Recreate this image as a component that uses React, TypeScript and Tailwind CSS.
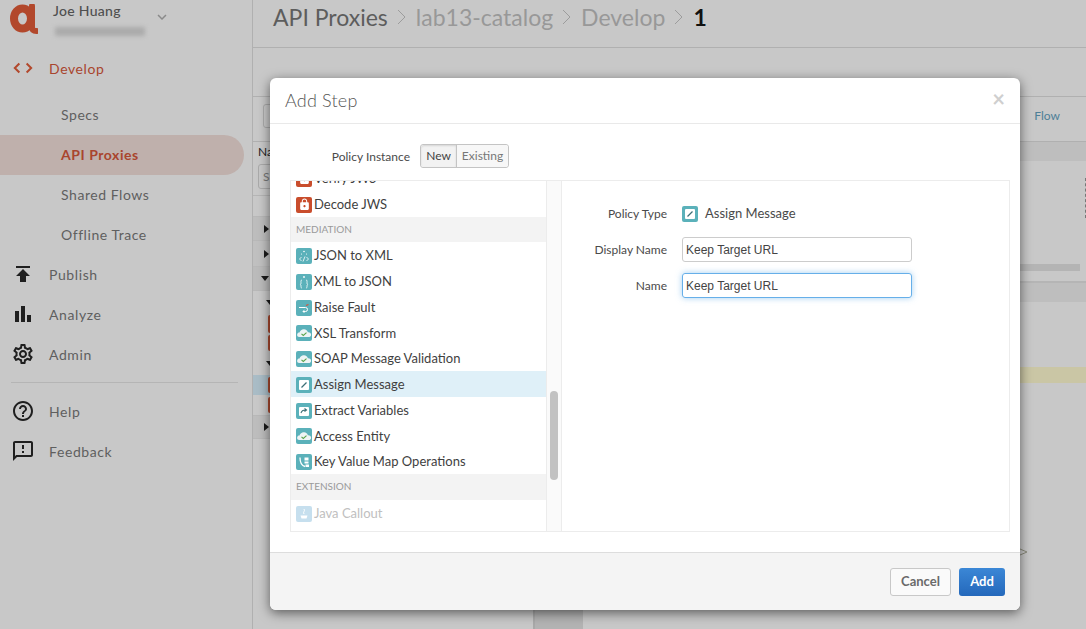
import React from "react";
import { MdPublish, MdBarChart, MdOutlineSettings, MdHelpOutline, MdOutlineFeedback, MdKeyboardArrowDown, MdLock } from "react-icons/md";

type Kind = "lock" | "code" | "braces" | "fault" | "cloud" | "edit" | "extract" | "kvm" | "java";

function PolicyIcon({ kind, dim }: { kind: Kind; dim?: boolean }) {
  const bg = kind === "lock" ? "bg-[#c94d2c]" : dim ? "bg-[#c6dfee]" : "bg-[#5bb1ba]";
  return (
    <span className={`flex h-[16px] w-[16px] shrink-0 items-center justify-center rounded-[2px] ${bg}`}>
      {kind === "lock" && <MdLock className="h-[13px] w-[13px] text-white" />}
      {kind !== "lock" && (
        <svg viewBox="0 0 16 16" className="h-[16px] w-[16px]" fill="none" stroke="#fff" strokeWidth="1">
          {kind === "code" && (
            <>
              <circle cx="8" cy="3.5" r="0.8" fill="#fff" stroke="none" />
              <circle cx="5.5" cy="6" r="0.6" fill="#fff" stroke="none" />
              <circle cx="10.5" cy="6" r="0.6" fill="#fff" stroke="none" />
              <path d="M5.5 9 3.5 11l2 2M10.5 9l2 2-2 2M9 8.5l-2 5" strokeWidth="0.8" />
            </>
          )}
          {kind === "braces" && (
            <>
              <circle cx="8" cy="3" r="0.9" fill="#fff" stroke="none" />
              <path d="M6 6c-1.4 0-1 1.5-1 2.5S5 10 4 10.5c1 .5 1 .8 1 2s.2 1.5 1 1.5M10 6c1.4 0 1 1.5 1 2.5s0 1.500 1 2c-1 .5-1 .8-1 2s-.2 1.500-1 1.500" strokeWidth="0.8" />
            </>
          )}
          {kind === "fault" && (
            <>
              <path d="M3 7.500h6.500a2 2 0 0 1 0 4H7" strokeWidth="1" />
              <path d="M8.500 9.800 7 11.500l1.500 1.500" strokeWidth="0.8" />
              <path d="M10 5.500l2.500-1" stroke="#d9533a" strokeWidth="1.200" />
            </>
          )}
          {kind === "cloud" && (
            <>
              <path d="M3.500 12C1.500 12 .8 10.500 1.200 9.200 1.500 8 2.500 7.500 3.500 7.600 4 5.500 6 4 8 4.200c2 .1 3.500 1.400 3.800 3 2-.2 3.300 1 3.300 2.500S14 12 12.500 12Z" fill="#eef4f5" stroke="none" />
              <path d="M5.500 8.800 7.300 10.500l3.200-2.800" stroke="#5aa34a" strokeWidth="1.100" />
            </>
          )}
          {kind === "edit" && (
            <>
              <rect x="3" y="3" width="10" height="10" rx="1" fill="#fff" stroke="none" />
              <path d="M5.500 10.500 10.500 5.500" stroke="#3d6f76" strokeWidth="1.300" />
            </>
          )}
          {kind === "extract" && (
            <>
              <rect x="3" y="4" width="10" height="9" rx="1" fill="#fff" stroke="none" />
              <path d="M5 10c.5-2 2-3 4.500-3M8.500 5.500 10.500 7 8.500 8.500" stroke="#3d6f76" strokeWidth="1.100" />
            </>
          )}
          {kind === "kvm" && (
            <>
              <path d="M4 3.500c0 5 1 8 5 9" strokeWidth="1.300" />
              <rect x="8.500" y="3.500" width="4" height="3" fill="#fff" stroke="none" />
              <rect x="8.500" y="7.500" width="4" height="2" fill="#fff" stroke="none" />
              <rect x="9.500" y="10.500" width="3.500" height="2.500" fill="#fff" stroke="none" />
            </>
          )}
          {kind === "java" && (
            <>
              <path d="M8 3c1.500 2-1.500 3 0 5" strokeWidth="1" />
              <path d="M4.500 9.500h7l-1 3h-5Z" fill="#fff" stroke="none" />
            </>
          )}
        </svg>
      )}
    </span>
  );
}

function Row({ kind, label, selected, dim }: { kind: Kind; label: string; selected?: boolean; dim?: boolean }) {
  return (
    <div className={`flex h-[25.75px] items-center gap-[2px] pl-[5px] pt-[2px] text-[13px] ${selected ? "bg-[#dff0f8]" : ""} ${dim ? "text-[#c0c0c0]" : "text-[#3f3f3f]"}`}>
      <PolicyIcon kind={kind} dim={dim} />
      <span>{label}</span>
    </div>
  );
}

function GroupHead({ label }: { label: string }) {
  return <div className="flex h-[25.75px] items-center bg-[#f3f3f3] pl-[5px] text-[10px] text-[#9a9a9a]">{label}</div>;
}

function NavItem({ icon, label, active }: { icon: React.ReactNode; label: string; active?: boolean }) {
  return (
    <div className={`flex h-10 items-center text-[14px] tracking-[0.6px] ${active ? "text-[#a9452e]" : "text-[#5f5f5f]"}`}>
      <span className="mr-[3px] flex w-[46px] shrink-0 justify-center">{icon}</span>
      <span>{label}</span>
    </div>
  );
}

function SubItem({ label, active }: { label: string; active?: boolean }) {
  return (
    <div className={`flex h-10 items-center pl-[61px] text-[14px] tracking-[0.55px] ${active ? "mr-2 translate-y-px rounded-r-full bg-[#bfb0ac] pb-[2px] font-bold tracking-[0.3px] text-[#a9452e]" : "text-[#5f5f5f]"}`}>
      {label}
    </div>
  );
}

function Chevron() {
  return (
    <svg viewBox="0 0 10 20" className="mx-[9px] mt-[5px] h-[20px] w-[10px]" fill="none" stroke="#9c9c9c" strokeWidth="1">
      <path d="M1 3l7 7-7 7" />
    </svg>
  );
}

function TreeArrow({ open, indent }: { open?: boolean; indent?: boolean }) {
  return (
    <span className={`${indent ? "ml-[13px]" : open ? "ml-[8px]" : "ml-[11px]"} inline-block h-0 w-0 ${open ? "border-x-[4px] border-t-[5px] border-x-transparent border-t-[#1a1a1a]" : "border-y-[4px] border-l-[5px] border-y-transparent border-l-[#1a1a1a]"}`} />
  );
}

export default function App() {
  return (
    <div className="relative flex h-[629px] w-[1086px] overflow-hidden bg-[#c8c8c8] font-['Lato','Noto_Sans',sans-serif]">
      {/* Sidebar */}
      <aside className="flex w-[253px] shrink-0 flex-col border-r border-[#b0b0b0]">
        <div className="flex h-[48px] items-start">
          <svg viewBox="0 0 28 30" className="ml-[10px] mt-[4px] h-[30px] w-[28px]" fill="none">
            <ellipse cx="12.500" cy="14.500" rx="8.500" ry="10" stroke="#b2482c" strokeWidth="8" />
            <path d="M22 2v21c0 3 1.500 4 4.500 4" stroke="#b2482c" strokeWidth="6" strokeLinecap="round" />
          </svg>
          <div className="ml-[15px] flex flex-col">
            <span className="mt-[1px] text-[14px] font-medium leading-[20px] tracking-[0.3px] text-[#4f4f4f]">Joe Huang</span>
            <span className="ml-[2px] mt-[6px] h-[9px] w-[90px] bg-[#ababab] blur-[2px]" />
          </div>
          <MdKeyboardArrowDown className="ml-[8px] mt-[8px] h-[18px] w-[18px] text-[#8a8a8a]" />
        </div>
        <NavItem
          active
          label="Develop"
          icon={
            <svg viewBox="0 0 22 12" className="h-[12px] w-[20px]" fill="none" stroke="#b2482c" strokeWidth="2.200">
              <path d="M7 1 2 6l5 5M15 1l5 5-5 5" />
            </svg>
          }
        />
        <div className="mt-[6px] flex flex-col">
          <SubItem label="Specs" />
          <SubItem label="API Proxies" active />
          <SubItem label="Shared Flows" />
          <SubItem label="Offline Trace" />
        </div>
        <NavItem label="Publish" icon={<MdPublish className="h-[24px] w-[24px] text-[#1f1f1f]" />} />
        <NavItem label="Analyze" icon={<MdBarChart className="h-[24px] w-[24px] text-[#1f1f1f]" />} />
        <NavItem label="Admin" icon={<MdOutlineSettings className="h-[24px] w-[24px] text-[#1f1f1f]" />} />
        <div className="mb-[8px] ml-[11px] mr-[14px] mt-[8px] border-t border-[#b5b5b5]" />
        <NavItem label="Help" icon={<MdHelpOutline className="h-[24px] w-[24px] text-[#1f1f1f]" />} />
        <NavItem label="Feedback" icon={<MdOutlineFeedback className="h-[24px] w-[24px] text-[#1f1f1f]" />} />
      </aside>

      {/* Main behind the dialog */}
      <main className="flex min-w-0 flex-1 flex-col">
        <header className="flex h-[48px] shrink-0 items-start border-b border-[#b0b0b0] pl-[20px] pt-[2px] text-[23px] leading-[30px]">
          <span className="text-[#5d5d5d]">API Proxies</span>
          <Chevron />
          <span className="text-[#989898]">lab13-catalog</span>
          <Chevron />
          <span className="text-[#989898]">Develop</span>
          <Chevron />
          <span className="font-bold text-[#111111]">1</span>
        </header>
        <div className="h-[49px] shrink-0 border-b border-[#b0b0b0]" />
        <div className="flex h-[45px] shrink-0 items-center justify-between border-b border-[#b0b0b0] pb-[7px] pl-[10px] pr-[26px]">
          <span className="h-[24px] w-[40px] rounded-[3px] border border-[#aaaaaa]" />
          <span className="text-[12px] text-[#4d7f97]">Flow</span>
        </div>
        <div className="flex min-h-0 flex-1">
          <div className="flex w-[280px] shrink-0 flex-col">
            <div className="h-[54px] shrink-0 border-b border-[#b5b5b5] pl-[5px] pt-[1px] text-[12px] text-[#222222]">
              Na
              <div className="mt-[3px] flex h-[25px] w-[40px] items-center rounded-[3px] border border-[#aaaaaa] pl-[4px] text-[#777777]">S</div>
            </div>
            <div className="h-[20px] shrink-0" />
            <div className="flex h-[25px] shrink-0 items-center border-y border-[#b8b8b8] bg-[#bdbdbd]"><TreeArrow /></div>
            <div className="flex h-[25px] shrink-0 items-center bg-[#c0c0c0]"><TreeArrow /></div>
            <div className="flex h-[25px] shrink-0 items-center border-y border-[#b8b8b8] bg-[#bbbbbb]"><TreeArrow open /></div>
            <div className="flex h-[22px] shrink-0 items-center"><TreeArrow open indent /></div>
            <div className="flex h-[21px] shrink-0 items-center pl-[15px]"><span className="h-[18px] w-[6px] rounded-l-[2px] bg-[#a9492f]" /></div>
            <div className="flex h-[18px] shrink-0 items-center pl-[15px]"><span className="h-[16px] w-[6px] rounded-l-[2px] bg-[#a9492f]" /></div>
            <div className="flex h-[23px] shrink-0 items-center"><TreeArrow open indent /></div>
            <div className="flex h-[20px] shrink-0 items-center bg-[#a9bcc6] pl-[15px]"><span className="h-[16px] w-[6px] rounded-l-[2px] bg-[#a9492f]" /></div>
            <div className="flex h-[20px] shrink-0 items-center pl-[15px]"><span className="h-[16px] w-[6px] rounded-l-[2px] bg-[#a9492f]" /></div>
            <div className="flex h-[24px] shrink-0 items-center border-y border-[#b8b8b8] bg-[#bdbdbd]"><TreeArrow /></div>
          </div>
          <div className="flex min-w-0 flex-1 flex-col items-stretch">
            <div className="h-[19px] shrink-0 bg-[#bebebe]" />
            <div className="flex h-[103px] shrink-0 justify-end pt-[17px]">
              <span className="h-[40px] border-r border-dashed border-[#777777]" />
            </div>
            <div className="mr-[6px] h-[7px] shrink-0 bg-[#b4b4b4]" />
            <div className="h-[10px] shrink-0" />
            <div className="h-[21px] shrink-0 border-t-[2px] border-[#b5b5b5] bg-[#bebebe]" />
            <div className="h-[65px] shrink-0" />
            <div className="h-[16px] shrink-0 bg-[#cac6a5]" />
          </div>
        </div>
      </main>

      {/* Diagram pieces behind the dialog */}
      <div className="absolute left-[533px] top-[590px] h-[39px] w-[50px] border-l-[2px] border-[#a9a9a9] bg-[#b3b3b3]" />
      <svg viewBox="0 0 8 8" className="absolute left-[1020px] top-[548px] h-[8px] w-[8px]" fill="none" stroke="#8a8a7a" strokeWidth="1">
        <path d="M0 1l7 3-7 3" />
      </svg>

      {/* Dialog */}
      <div className="absolute left-[270px] top-[78px] flex h-[532px] w-[750px] flex-col overflow-hidden rounded-[6px] bg-white shadow-[0_3px_12px_rgba(0,0,0,0.55)]">
        <div className="flex h-[46px] shrink-0 items-center justify-between border-b border-[#e9e9e9] pl-[15px] pr-[15px]">
          <span className="text-[18px] font-light tracking-[0.2px] text-[#555555]">Add Step</span>
          <span className="-mt-[3px] text-[22px] font-bold leading-none text-[#cfcfcf]">×</span>
        </div>
        <div className="flex min-h-0 flex-1 flex-col pl-[20px] pr-[10px]">
          <div className="mt-[20px] flex h-[24px] shrink-0 items-center">
            <span className="w-[120px] pt-[1px] text-right text-[12px] text-[#4a4a4a]">Policy Instance</span>
            <div className="ml-[10px] flex h-[24px] rounded-[3px] border border-[#c4c4c4] text-[12px]">
              <span className="flex w-[36px] items-center justify-center rounded-l-[3px] border-r border-[#c4c4c4] bg-[#f2f2f2] text-[#444444] shadow-[inset_0_1px_2px_rgba(0,0,0,0.12)]">New</span>
              <span className="flex w-[51px] items-center justify-center rounded-r-[3px] bg-[#f7f7f7] text-[#777777]">Existing</span>
            </div>
          </div>
          <div className="mt-[12px] flex h-[352px] shrink-0 border border-[#ececec]">
            <div className="w-[255px] shrink-0 overflow-hidden">
              <div className="-mt-4">
                <Row kind="lock" label="Verify JWS" />
                <Row kind="lock" label="Decode JWS" />
                <GroupHead label="MEDIATION" />
                <Row kind="code" label="JSON to XML" />
                <Row kind="braces" label="XML to JSON" />
                <Row kind="fault" label="Raise Fault" />
                <Row kind="cloud" label="XSL Transform" />
                <Row kind="cloud" label="SOAP Message Validation" />
                <Row kind="edit" label="Assign Message" selected />
                <Row kind="extract" label="Extract Variables" />
                <Row kind="cloud" label="Access Entity" />
                <Row kind="kvm" label="Key Value Map Operations" />
                <GroupHead label="EXTENSION" />
                <Row kind="java" label="Java Callout" dim />
              </div>
            </div>
            <div className="w-[16px] shrink-0 border-x border-[#ececec] bg-[#fafafa] pl-[3px] pt-[210px]">
              <div className="h-[89px] w-[8px] rounded-full bg-[#c2c2c2]" />
            </div>
            <div className="grid flex-1 grid-cols-[105px_230px] content-start gap-x-[15px] gap-y-[11px] pt-[20px]">
              <span className="flex h-[25px] items-center justify-end text-[12px] text-[#4a4a4a]">Policy Type</span>
              <span className="flex h-[25px] items-center gap-[7px] pt-[1px] text-[13px] text-[#4a4a4a]">
                <PolicyIcon kind="edit" />
                Assign Message
              </span>
              <span className="flex h-[25px] items-center justify-end text-[12px] text-[#4a4a4a]">Display Name</span>
              <input readOnly value="Keep Target URL" className="h-[25px] w-[230px] rounded-[3px] border border-[#cccccc] px-[3px] font-['Liberation_Sans',sans-serif] text-[12px] text-[#444444] outline-none" />
              <span className="flex h-[25px] items-center justify-end text-[12px] text-[#4a4a4a]">Name</span>
              <input readOnly value="Keep Target URL" className="h-[25px] w-[230px] rounded-[3px] border border-[#66afe9] px-[3px] font-['Liberation_Sans',sans-serif] text-[12px] text-[#444444] shadow-[0_0_6px_rgba(102,175,233,0.6)] outline-none" />
            </div>
          </div>
        </div>
        <div className="flex h-[58px] shrink-0 items-center justify-end gap-[8px] border-t border-[#dddddd] bg-[#f4f4f4] pr-[15px]">
          <span className="flex h-[28px] w-[61px] items-center justify-center rounded-[3px] border border-[#c8c8c8] bg-[#fafafa] text-[13px] font-bold text-[#6a6a6a]">Cancel</span>
          <span className="flex h-[28px] w-[46px] items-center justify-center rounded-[3px] bg-gradient-to-b from-[#3b87d6] to-[#2468bb] text-[13px] font-bold text-white">Add</span>
        </div>
      </div>
    </div>
  );
}
